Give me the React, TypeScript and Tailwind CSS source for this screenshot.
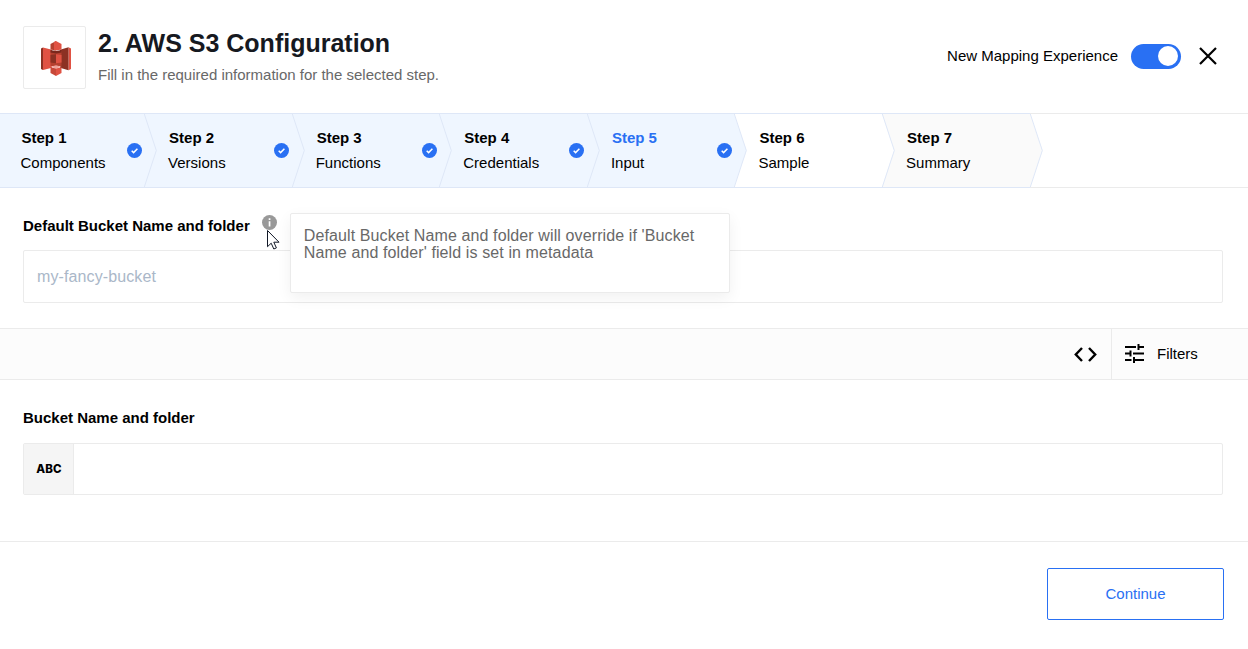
type StepState = 'done' | 'open' | 'last';

interface Step {
  title: string;
  label: string;
  state: StepState;
  current?: boolean;
}

const steps: Step[] = [
  { title: 'Step 1', label: 'Components', state: 'done' },
  { title: 'Step 2', label: 'Versions', state: 'done' },
  { title: 'Step 3', label: 'Functions', state: 'done' },
  { title: 'Step 4', label: 'Credentials', state: 'done' },
  { title: 'Step 5', label: 'Input', state: 'done', current: true },
  { title: 'Step 6', label: 'Sample', state: 'open' },
  { title: 'Step 7', label: 'Summary', state: 'last' },
];

const background: Record<StepState, string> = {
  done: 'bg-[#eff6ff]',
  open: 'bg-white',
  last: 'bg-[#fafafa]',
};

const arrowFill: Record<StepState, string> = {
  done: '#eff6ff',
  open: '#ffffff',
  last: '#fafafa',
};

function S3Logo() {
  return (
    <svg width="30" height="35" viewBox="0 0 30 35">
      <path d="M0 7.500 2 6.500v22.500L0 28z" fill="#8c3123" />
      <path d="M2 6.500 11 8.700v18L2 29z" fill="#e05243" />
      <path d="M30 7.500 27.500 6.300v23l2.500-1.300z" fill="#e05243" />
      <path d="M27.500 6.300 19 8.700v18l8.500 2.600z" fill="#8c3123" />
      <path d="M9.500 10h11v15h-11z" fill="#b5402f" />
      <path d="M15 9.500 9.500 8.500V3L15 0z" fill="#b5402f" />
      <path d="M15 9.500l5.500-1V3L15 0l-2 1.100v8.100z" fill="#e05243" />
      <path d="M9.500 9 15 10l5.500-1v2.500L15 12.500l-5.500-1z" fill="#7a281d" />
      <path d="M9.500 14l5.500-.8v9.100l-5.500-.8z" fill="#8c3123" />
      <path d="M20.500 14l-5.500-.8v9.100l5.500-.8z" fill="#e05243" />
      <path d="M9.500 25.800 15 24.300l5.500 1.500L15 27.500z" fill="#efa299" />
      <path d="M9.500 26.200 15 27.500V35l-5.500-3z" fill="#c74839" />
      <path d="M20.500 26.200 15 27.500V35l5.500-3z" fill="#e05243" />
    </svg>
  );
}

function StepItem({ step }: { step: Step }) {
  return (
    <li className={`relative flex w-[147.600px] shrink-0 items-center justify-between pl-[24px] pr-[2.500px] ${background[step.state]}`}>
      <div className="-mt-[2px] text-[15px] leading-[25px]">
        <div className={`pl-px font-bold ${step.current ? 'text-[#2970f3]' : 'text-black'}`}>{step.title}</div>
        <div>{step.label}</div>
      </div>
      {step.state === 'done' && (
        <svg className="z-20" width="15" height="15" viewBox="0 0 15 15">
          <circle cx="7.5" cy="7.5" r="7.5" fill="#2970f3" />
          <path d="M4.700 7.700 6.600 9.600 10.400 5.800" fill="none" stroke="#fff" strokeWidth="1.500" />
        </svg>
      )}
      <svg className="absolute -right-[13px] top-0 z-10" width="13" height="73" viewBox="0 0 13 73">
        <path d="M0 0 12.300 36.500 0 73z" fill={arrowFill[step.state]} />
        <path d="M.3 0 12.300 36.500.3 73" fill="none" stroke="#dee7f7" />
      </svg>
    </li>
  );
}

export default function App() {
  return (
    <main className="flex h-[649px] w-[1248px] flex-col overflow-hidden bg-white font-['Liberation_Sans',Arial,sans-serif] text-[15px] text-black">
      <header className="flex h-[113px] shrink-0 items-start justify-between pl-[23px] pr-[31px]">
        <div className="flex">
          <div className="mt-[26px] flex size-[63px] items-center justify-center rounded-[2px] border border-[#ebebeb] pl-[2px] pt-[2px]">
            <S3Logo />
          </div>
          <div className="ml-3 mt-[27px]">
            <h1 className="text-[25px] font-bold leading-8 text-[#16191f]">2. AWS S3 Configuration</h1>
            <p className="mt-[6px] leading-5 text-[#686868]">Fill in the required information for the selected step.</p>
          </div>
        </div>
        <div className="mt-[44px] flex items-center">
          <span>New Mapping Experience</span>
          <button aria-label="New Mapping Experience" className="ml-[13px] flex h-[25px] w-[50px] items-center justify-end rounded-full bg-[#2970f3] pr-[3px]">
            <span className="-mt-px size-5 rounded-full bg-white" />
          </button>
          <button aria-label="Close" className="-mt-px ml-[18px]">
            <svg width="18" height="18" viewBox="0 0 18 18">
              <path d="M1 1 17 17M17 1 1 17" stroke="#000" strokeWidth="2.200" />
            </svg>
          </button>
        </div>
      </header>

      <nav className="h-[75px] shrink-0 border-y border-[#ebebeb]">
        <ol className="-my-px -ml-[3.500px] flex h-[75px] w-[1033.500px] border-y border-[#dee7f7]">
          {steps.map((step) => (
            <StepItem key={step.title} step={step} />
          ))}
        </ol>
      </nav>

      <section className="h-[140px] shrink-0 pl-[23px] pr-[25px] pt-[28px]">
        <div className="flex h-5 items-center">
          <label className="font-bold">Default Bucket Name and folder</label>
          <div className="relative -mt-2 ml-3 size-[15px]">
            <svg width="15" height="15" viewBox="0 0 15 15">
              <circle cx="7.500" cy="7.500" r="7.500" fill="#999" />
              <path d="M6.700 3.300h1.700V5H6.700zM6.700 6.200h1.700v5.300H6.700z" fill="#fff" />
            </svg>
            <svg className="absolute left-[5px] top-[15px] z-30" width="13" height="20" viewBox="0 0 13 20">
              <path d="M.5.500v16.200l3.700-3.500 2.600 5.800 2.600-1.100-2.600-5.700h5.200z" fill="#fff" stroke="#111827" />
            </svg>
            <div role="tooltip" className="absolute -top-[2px] left-[28px] z-20 h-[80px] w-[440px] rounded-[2px] border border-[#ebebeb] bg-white px-[13px] pt-[13px] text-base leading-[17px] tracking-[0.110px] text-[#686868] shadow-[0_5px_15px_rgba(0,0,0,0.06)]">
              Default Bucket Name and folder will override if 'Bucket Name and folder' field is set in metadata
            </div>
          </div>
        </div>
        <input
          placeholder="my-fancy-bucket"
          className="mt-[14px] block h-[53px] w-full rounded-[2px] border border-[#ebebeb] px-[13px] text-base tracking-[0.110px] outline-none placeholder:text-[#aab7c8]"
        />
      </section>

      <div className="flex h-[52px] shrink-0 justify-end border-y border-[#ebebeb] bg-[#fcfcfc]">
        <button aria-label="Code view" className="flex items-center pr-[14px]">
          <svg width="23" height="15" viewBox="0 0 23 15">
            <path d="M8 1 1.800 7.500 8 14M15 1l6.200 6.500L15 14" fill="none" stroke="#000" strokeWidth="2.400" />
          </svg>
        </button>
        <button className="flex w-[137px] items-center border-l border-[#ebebeb] pl-[13px]">
          <svg className="-mt-px" width="19" height="19" viewBox="0 0 19 19">
            <path d="M0 3h11M13.500 3H19M13.500 0v6M0 9.500h5.500M5.500 6.500v6M8 9.500h11M0 16h6.500M9 16h10M9 13v6" fill="none" stroke="#000" strokeWidth="2" />
          </svg>
          <span className="ml-[13px]">Filters</span>
        </button>
      </div>

      <section className="h-[161px] shrink-0 pl-[23px] pr-[25px] pt-[28px]">
        <label className="block font-bold leading-5">Bucket Name and folder</label>
        <div className="mt-[15px] flex h-[52px] rounded-[2px] border border-[#ebebeb]">
          <span className="flex w-[50px] items-center justify-center border-r border-[#ebebeb] bg-[#f5f5f5] pl-px pt-[2px] font-['Inter',sans-serif] text-[11.500px] font-extrabold tracking-[0.200px]">ABC</span>
          <input aria-label="Bucket Name and folder" className="min-w-0 flex-1 px-3 outline-none" />
        </div>
      </section>

      <footer className="flex flex-1 items-start justify-end border-t border-[#ebebeb] pr-6 pt-[26px]">
        <button className="h-[52px] w-[177px] rounded-[2px] border border-[#2970f3] text-[#2970f3]">Continue</button>
      </footer>
    </main>
  );
}
